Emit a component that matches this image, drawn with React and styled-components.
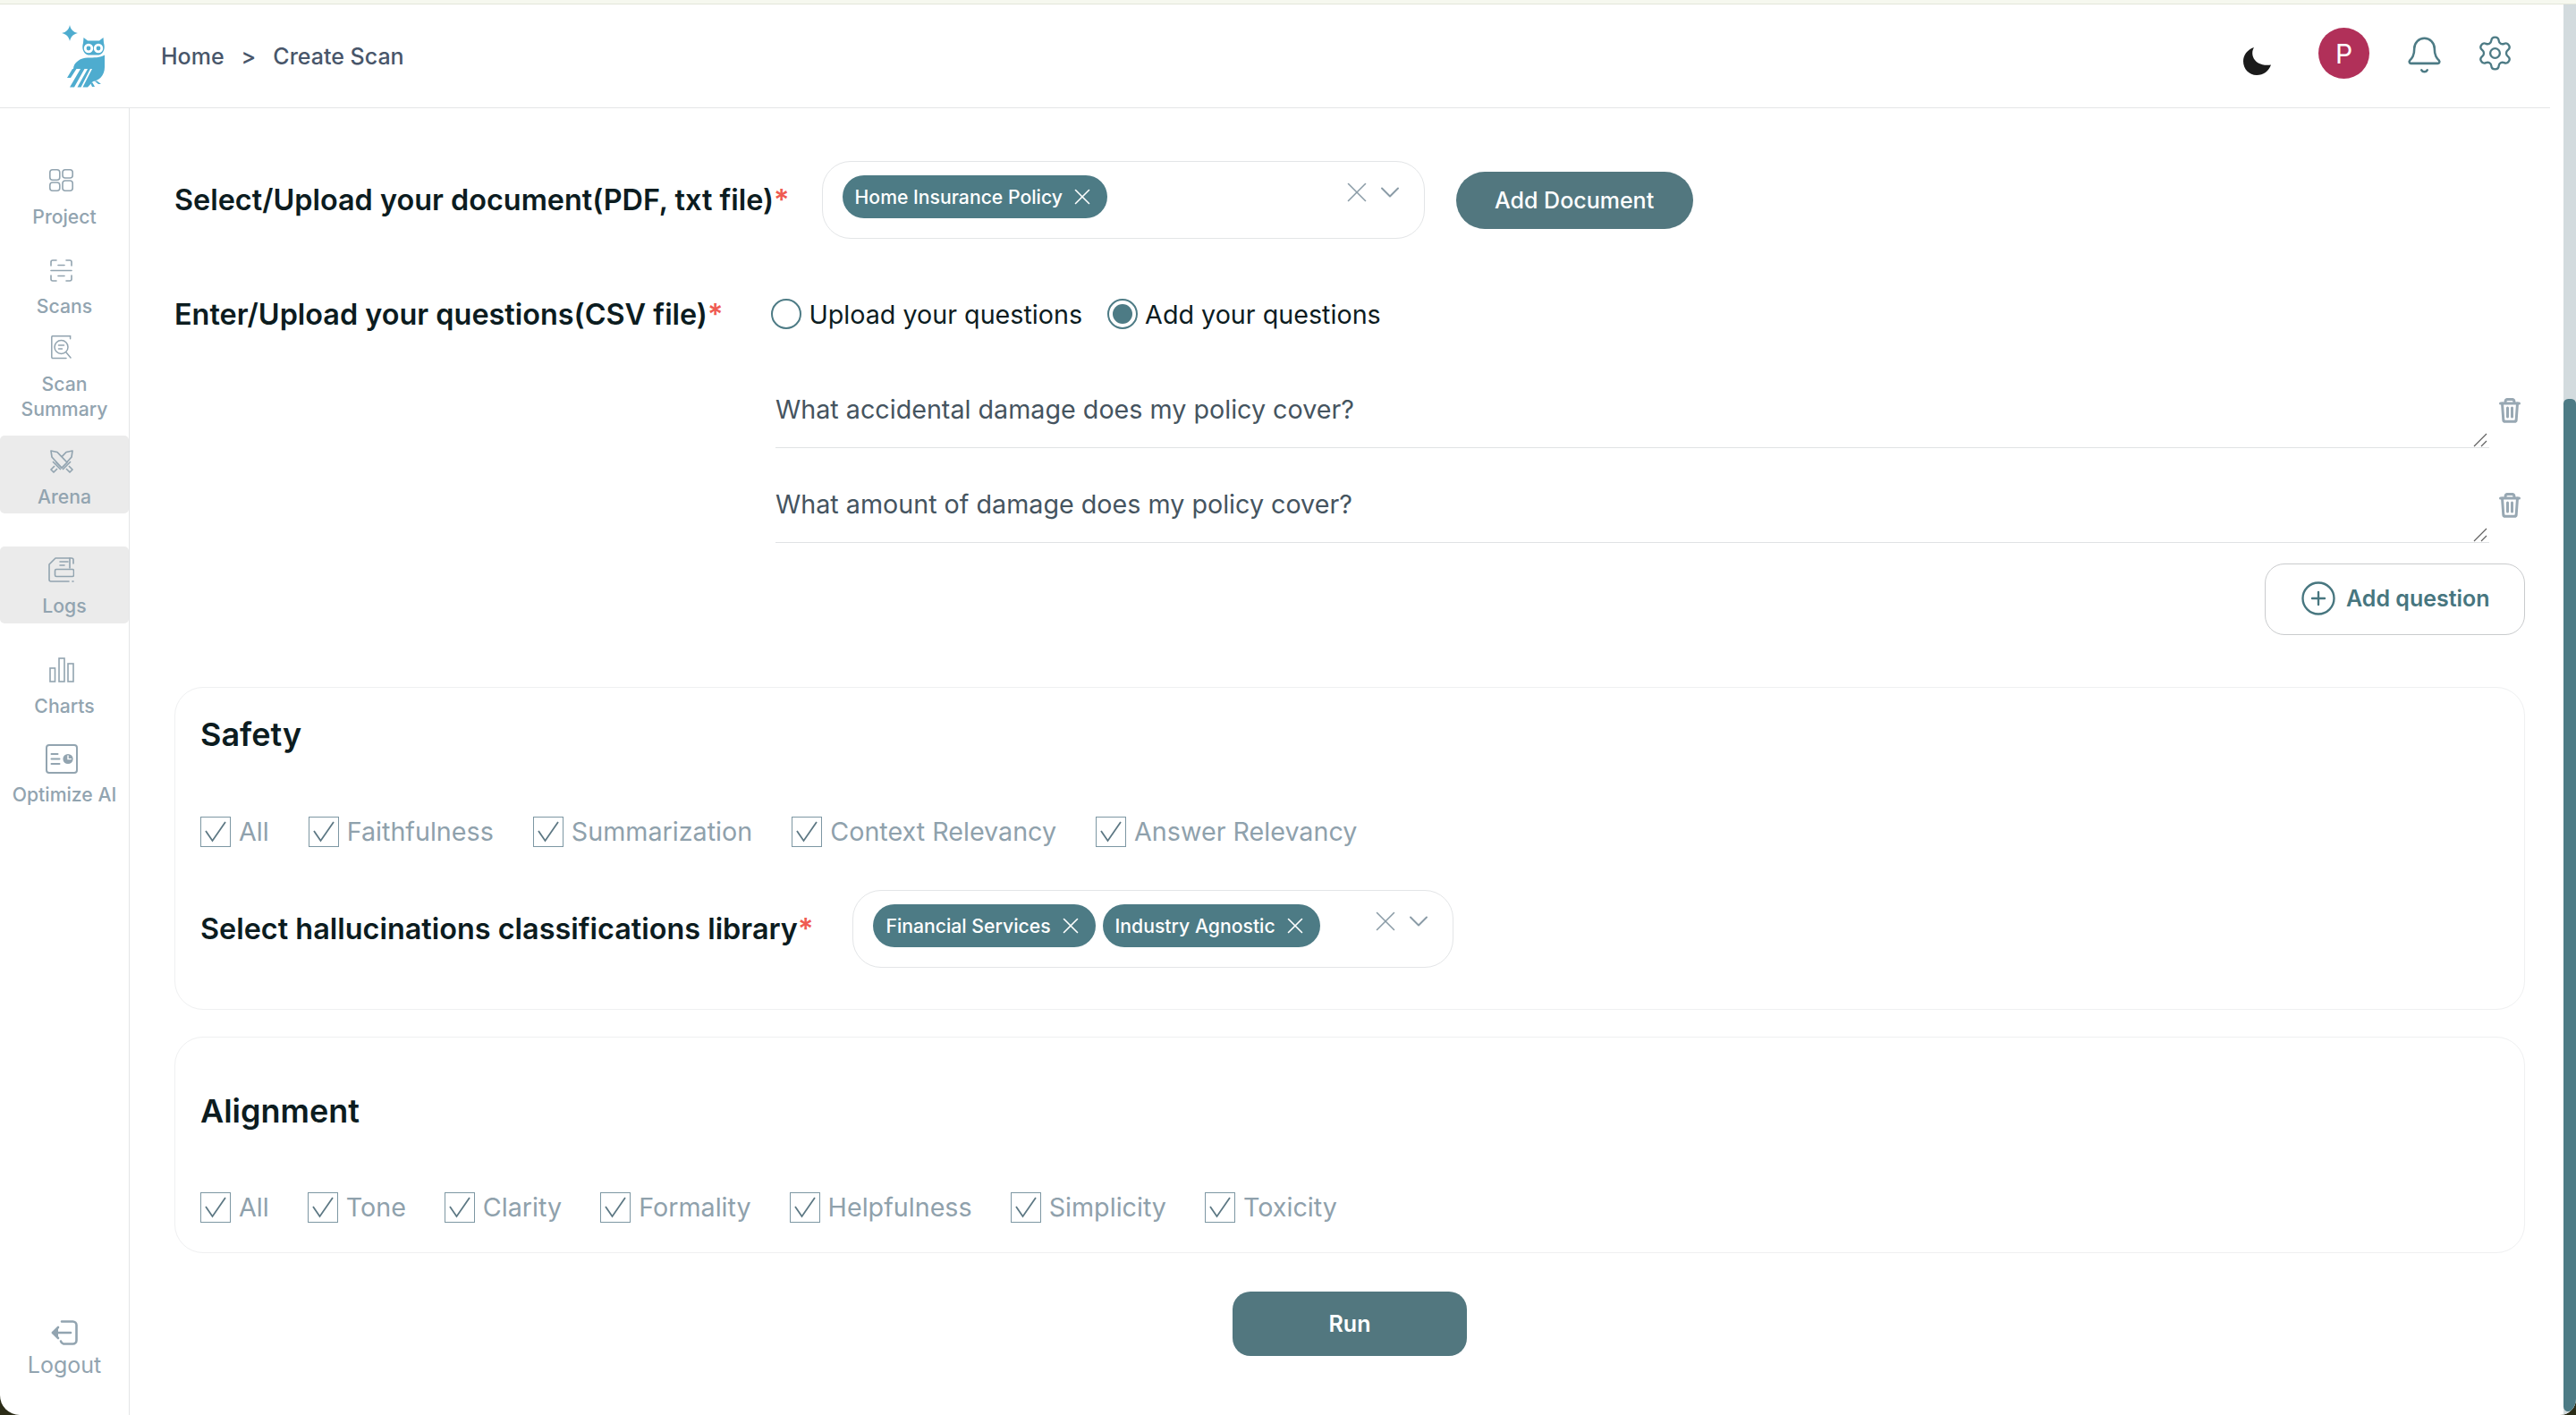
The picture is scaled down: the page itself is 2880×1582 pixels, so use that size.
import React from "react";
import styled, { createGlobalStyle } from "styled-components";
import { Bell, Settings, X, ChevronDown, CirclePlus } from "lucide-react";

const GlobalStyle = createGlobalStyle`
  html, body {
    margin: 0;
    padding: 0;
    background: #2b2c17;
    font-family: "Inter", "Liberation Sans", sans-serif;
  }
  * {
    box-sizing: border-box;
  }
`;

const ProjectIcon = () => (
  <svg width="27" height="25" viewBox="0 0 27 25" fill="none" stroke="currentColor" strokeWidth="1.6">
    <rect x="0.8" y="0.8" width="11" height="11.5" rx="3" />
    <rect x="15" y="0.8" width="11.2" height="9.2" rx="3" />
    <rect x="0.8" y="15" width="11" height="9.2" rx="3" />
    <rect x="15" y="13" width="11.2" height="11.2" rx="3" />
  </svg>
);

const ScansIcon = () => (
  <svg width="25" height="25" viewBox="0 0 25 25" fill="none" stroke="currentColor" strokeWidth="1.6" strokeLinecap="round">
    <path d="M1 7V3a2 2 0 0 1 2-2h4M18 1h4a2 2 0 0 1 2 2v4M1 18v4a2 2 0 0 0 2 2h4M18 24h4a2 2 0 0 0 2-2v-4" />
    <path d="M1 12.5h23M9 6.5h7M9 18.5h7" />
  </svg>
);

const SummaryIcon = () => (
  <svg width="23" height="27" viewBox="0 0 23 27" fill="none" stroke="currentColor" strokeWidth="1.5" strokeLinecap="round">
    <path d="M17 25.5H2a1.2 1.2 0 0 1-1.2-1.2V1.8A1.2 1.2 0 0 1 2 .7h19.6v3" />
    <circle cx="11.5" cy="13" r="7.5" />
    <path d="M8.5 11h6M8.5 15h4M17 19l5 6" />
  </svg>
);

const ArenaIcon = () => (
  <svg width="28" height="26" viewBox="0 0 28 26" fill="none" stroke="currentColor" strokeWidth="1.7" strokeLinejoin="round">
    <path d="M26 1l-7 1.500L8 14l6 6L25 8z" />
    <path d="M2 1l7 1.500L20 14l-6 6L3 8z" fill="#ebebeb" />
    <path d="M4 13l9 9M24 13l-9 9" />
    <path d="M6 18l-4 4 3 3 4-4M22 18l4 4-3 3-4-4" />
  </svg>
);

const LogsIcon = () => (
  <svg width="29" height="28" viewBox="0 0 29 28" fill="none" stroke="currentColor" strokeWidth="1.6" strokeLinecap="round" strokeLinejoin="round">
    <path d="M8 1h18a2 2 0 0 1 2 2v4M1 8v17a2 2 0 0 0 2 2h20M8 1L1 8M27 27h1" />
    <rect x="7.500" y="13.500" width="21" height="8" rx="1.500" />
    <path d="M13 5h9M13 9h5M24 1v11" />
  </svg>
);

const ChartsIcon = () => (
  <svg width="28" height="28" viewBox="0 0 28 28" fill="none" stroke="currentColor" strokeWidth="1.6">
    <rect x="1" y="12" width="5.500" height="15" />
    <rect x="11" y="1" width="6" height="26" />
    <rect x="21" y="7" width="6" height="20" />
  </svg>
);

const OptimizeIcon = () => (
  <svg width="36" height="33" viewBox="0 0 36 33" fill="none" stroke="currentColor" strokeWidth="2" strokeLinecap="round">
    <rect x="1" y="1" width="34" height="31" rx="3" />
    <path d="M6.500 11h7M6.500 16.500h9M6.500 22h9" />
    <circle cx="25" cy="16.500" r="5.600" fill="currentColor" stroke="none" />
    <path d="M25 13v3.600h3.400" stroke="#fff" strokeWidth="1.400" />
  </svg>
);

const LogoutIcon = () => (
  <svg width="30" height="28" viewBox="0 0 30 28" fill="none" stroke="currentColor" strokeWidth="2.600" strokeLinecap="round" strokeLinejoin="round">
    <path d="M12 1.500h12.500a4 4 0 0 1 4 4v17a4 4 0 0 1-4 4H14a4 4 0 0 1-3-3" />
    <path d="M2 14h20" />
    <path d="M8 8l-6 6 6 6" fill="currentColor" />
  </svg>
);

const Owl = () => (
  <svg width="48" height="70" viewBox="69 28 48 70" fill="#4eaccf">
    <path d="M78 28C79 33 82 36 87 37 82 38 79 41 78 46 77 41 74 38 69 37 74 36 77 33 78 28Z" />
    <path d="M93.500 42L98 45.500H111L115.500 42 116 48C118.500 56 114 61.500 109 61.500H100C95 61.500 90.500 56 93 48Z" />
    <circle cx="99" cy="54" r="5.200" fill="#fff" />
    <circle cx="110" cy="54" r="5.200" fill="#fff" />
    <circle cx="99" cy="54" r="2.400" />
    <circle cx="110" cy="54" r="2.400" />
    <path d="M117 61.500V75C117 85 110 90 104 91L98 97.500H92.500L103 77H82C82 70 90 64.500 98 64.500 105 64.500 112 64.500 117 61.500Z" />
    <path d="M75 87L81 77H85.500L79 87ZM78 97.500L90 77H94.500L83 97.500ZM86.500 97.500L98 77H101L90.500 97.500Z" />
    <path d="M105.500 90.500H108.500L113 94H110ZM101 92.500L103.500 92.500 106 97H103Z" />
  </svg>
);

const Moon = () => (
  <svg width="31" height="31" viewBox="0 0 31 31" fill="#1b1b1b">
    <path d="M12 0C7 8 12.500 22 31 19.500 28.500 26.500 22.500 31 15 31 6.500 31 0 24 0 15.500 0 8.500 4.500 2.500 12 0Z" />
  </svg>
);

const Trash = () => (
  <svg width="24" height="28" viewBox="0 0 24 28" fill="none" stroke="#98a8b3" strokeWidth="3" strokeLinecap="round" strokeLinejoin="round">
    <path d="M1.500 6h21" />
    <path d="M7 5.500V4a2.800 2.800 0 0 1 2.800-2.600h4.400A2.800 2.800 0 0 1 17 4v1.500" />
    <path d="M3.500 6l1.300 18.500a2 2 0 0 0 2 1.800h10.400a2 2 0 0 0 2-1.800L20.500 6" />
    <path d="M9.500 11v10M14.500 11v10" />
  </svg>
);

const Tick = () => (
  <svg width="30" height="30" viewBox="0 0 30 30" fill="none" stroke="#5d7884" strokeWidth="1.800">
    <path d="M4 14l7.500 11L26 4" />
  </svg>
);

const Frame = styled.div`
  width: 2880px;
  height: 1582px;
  display: flex;
  flex-direction: column;
  background: #fff;
  overflow: hidden;
  border-bottom-left-radius: 22px;
  border-bottom-right-radius: 18px;
`;

const TopStrip = styled.div`
  height: 5px;
  flex: none;
  background: #f6f8ef;
  border-bottom: 1.5px solid #e3e6da;
`;

const Shell = styled.div`
  flex: 1;
  min-height: 0;
  display: flex;
`;

const MainColumn = styled.div`
  flex: 1;
  min-width: 0;
  display: flex;
  flex-direction: column;
`;

const ScrollTrack = styled.div`
  width: 14px;
  flex: none;
  background: #d3dbde;
  padding: 441px 0 4px;
`;

const ScrollThumb = styled.div`
  height: 100%;
  background: #4d7b85;
  border-radius: 7px 7px 12px 7px;
`;

const Header = styled.header`
  height: 116px;
  flex: none;
  margin-right: 15px;
  border-bottom: 1.5px solid #e4e5e7;
  display: flex;
  align-items: center;
  padding: 0 40px 6px 69px;
`;

const LogoSlot = styled.span`
  display: flex;
  margin-top: 6px;
`;

const Crumbs = styled.nav`
  margin-left: 63px;
  margin-top: 7px;
  display: flex;
  align-items: center;
  gap: 19px;
  font-size: 25px;
  font-weight: 500;
  color: #48566a;
`;

const HeaderActions = styled.div`
  margin-left: auto;
  display: flex;
  align-items: center;
  color: #4d7b85;
`;

const MoonSlot = styled.span`
  display: flex;
  margin: 18px 53px 0 0;
`;

const Avatar = styled.span`
  width: 57px;
  height: 57px;
  border-radius: 50%;
  background: #b13059;
  color: #fff;
  font-size: 30px;
  display: flex;
  align-items: center;
  justify-content: center;
  margin-right: 39px;
`;

const BellSlot = styled.span`
  display: flex;
  margin: 3px 35px 0 0;
`;

const Workspace = styled.div`
  flex: 1;
  min-height: 0;
  display: flex;
`;

const Sidebar = styled.aside`
  width: 145px;
  flex: none;
  border-right: 1.5px solid #e4e5e7;
  display: flex;
  flex-direction: column;
  padding-bottom: 40px;
`;

const NavItem = styled.div`
  margin-top: ${(p) => p.$top}px;
  height: ${(p) => p.$height}px;
  padding-top: ${(p) => p.$pad}px;
  background: ${(p) => (p.$active ? "#ebebeb" : "transparent")};
  border-radius: 5px;
  width: 144px;
  display: flex;
  flex-direction: column;
  align-items: center;
  color: #92a4b0;
  font-size: 21.2px;
  font-weight: 500;
  line-height: 28px;
  text-align: center;
`;

const NavIcon = styled.span`
  display: flex;
  height: ${(p) => p.$height}px;
  align-items: flex-start;
  margin-left: -7px;
`;

const LogoutItem = styled.div`
  margin-top: auto;
  display: flex;
  flex-direction: column;
  align-items: center;
  color: #92a4b0;
  font-size: 25px;
  line-height: 32px;
  gap: 6px;
`;

const Content = styled.main`
  flex: 1;
  min-width: 0;
  padding: 59px 43px 0 50px;
`;

const FieldRow = styled.div`
  display: flex;
  align-items: center;
`;

const FieldLabel = styled.label`
  font-size: 32.4px;
  font-weight: 600;
  color: #0c1c1f;
  white-space: nowrap;
`;

const Star = styled.span`
  color: #ef5b52;
`;

const MultiSelect = styled.div`
  width: ${(p) => p.$width}px;
  height: 87px;
  margin-left: ${(p) => p.$left}px;
  border: 1.5px solid #e3e5e7;
  border-radius: 32px;
  padding: 15px 22px;
  display: flex;
  align-items: flex-start;
  gap: 8px;
`;

const Chip = styled.span`
  height: 48px;
  border-radius: 24px;
  background: #4d7b85;
  color: #fff;
  font-size: 21.2px;
  font-weight: 500;
  padding: 0 13px 0 14px;
  display: flex;
  align-items: center;
  gap: 7px;
  white-space: nowrap;
`;

const SelectControls = styled.span`
  margin-left: auto;
  display: flex;
  align-items: center;
  height: 38px;
  margin-right: -2px;
  color: #8a9ba6;
`;

const PrimaryButton = styled.button`
  height: 64px;
  width: 265px;
  margin-left: 35px;
  border: 0;
  border-radius: 32px;
  background: #52777f;
  color: #fff;
  font: 500 25px "Inter", sans-serif;
`;

const QuestionHead = styled(FieldRow)`
  margin-top: 64px;
  height: 40px;
`;

const RadioGroup = styled.div`
  display: flex;
  align-items: center;
  margin-left: 54px;
  gap: 28px;
`;

const RadioOption = styled.span`
  display: flex;
  align-items: center;
  gap: 8px;
  font-size: 28.7px;
  color: #0c1c1f;
`;

const RadioMark = styled.span`
  width: 34px;
  height: 34px;
  border-radius: 50%;
  border: 2.500px solid #4d7b85;
  padding: 4px;
  display: flex;
`;

const RadioDot = styled.span`
  flex: 1;
  border-radius: 50%;
  background: #4d7b85;
`;

const Questions = styled.div`
  margin-left: 672px;
  margin-top: 30px;
  display: flex;
  flex-direction: column;
  gap: 6px;
`;

const QuestionRow = styled.div`
  display: flex;
  align-items: flex-start;
  gap: 11px;
`;

const QuestionField = styled.div`
  flex: 1;
  position: relative;
  display: flex;
`;

const QuestionInput = styled.textarea`
  flex: 1;
  height: 100px;
  border: 0;
  border-bottom: 1.500px solid #e0e2e4;
  padding: 40px 0 0;
  outline: none;
  font: 400 28.7px/34px "Inter", sans-serif;
  color: #45545f;
  resize: none;
`;

const ResizeGrip = styled.svg`
  position: absolute;
  right: 2px;
  bottom: 1px;
`;

const TrashButton = styled.span`
  display: flex;
  width: 29px;
  padding-top: 44px;
`;

const AddRow = styled.div`
  display: flex;
  justify-content: flex-end;
  margin-top: 23px;
`;

const AddQuestion = styled.button`
  width: 291px;
  height: 80px;
  background: #fff;
  border: 1.500px solid #c9cbcd;
  border-radius: 22px;
  color: #47767f;
  font: 600 25px "Inter", sans-serif;
  display: flex;
  align-items: center;
  padding: 0 0 2px 38px;
  gap: 10px;
`;

const Card = styled.section`
  height: ${(p) => p.$height}px;
  margin-top: ${(p) => p.$top}px;
  border: 1.500px solid #eff0f1;
  border-radius: 32px;
  padding: ${(p) => p.$pad}px 28px 0;
`;

const CardTitle = styled.h2`
  margin: 0;
  font-size: 36px;
  font-weight: 600;
  line-height: 44px;
  color: #0c1c1f;
`;

const Checks = styled.div`
  display: flex;
  align-items: center;
  gap: ${(p) => p.$gap}px;
  margin-top: ${(p) => p.$top}px;
`;

const CheckOption = styled.span`
  display: flex;
  align-items: center;
  gap: 9px;
  font-size: 28.7px;
  line-height: 34px;
  color: #8fa1ac;
`;

const CheckBox = styled.span`
  width: 34px;
  height: 34px;
  border: 1.500px solid #7d97a3;
  display: flex;
  align-items: center;
  justify-content: center;
`;

const LibraryRow = styled(FieldRow)`
  margin-top: 48px;
`;

const RunRow = styled.div`
  display: flex;
  justify-content: center;
  margin-top: 43px;
`;

const RunButton = styled.button`
  width: 262px;
  height: 72px;
  border: 0;
  border-radius: 20px;
  background: #52777f;
  color: #fff;
  font: 600 25px "Inter", sans-serif;
`;

const navItems = [
  { label: "Project", icon: <ProjectIcon />, top: 68, height: 82, pad: 0, iconHeight: 39 },
  { label: "Scans", icon: <ScansIcon />, top: 19, height: 68, pad: 0, iconHeight: 38 },
  { label: "Scan Summary", icon: <SummaryIcon />, top: 17, height: 100, pad: 0, iconHeight: 40 },
  { label: "Arena", icon: <ArenaIcon />, top: 12, height: 87, pad: 16, iconHeight: 38, active: true },
  { label: "Logs", icon: <LogsIcon />, top: 37, height: 86, pad: 12, iconHeight: 40, active: true },
  { label: "Charts", icon: <ChartsIcon />, top: 38, height: 68, pad: 0, iconHeight: 40 },
  { label: "Optimize AI", icon: <OptimizeIcon />, top: 29, height: 70, pad: 0, iconHeight: 42 },
];

const safety = ["All", "Faithfulness", "Summarization", "Context Relevancy", "Answer Relevancy"];
const alignment = ["All", "Tone", "Clarity", "Formality", "Helpfulness", "Simplicity", "Toxicity"];
const questions = [
  "What accidental damage does my policy cover?",
  "What amount of damage does my policy cover?",
];

const CheckList = ({ items, top, gap }) => (
  <Checks $top={top} $gap={gap}>
    {items.map((item) => (
      <CheckOption key={item}>
        <CheckBox>
          <Tick />
        </CheckBox>
        {item}
      </CheckOption>
    ))}
  </Checks>
);

const SelectChip = ({ children }) => (
  <Chip>
    {children}
    <X size={30} strokeWidth={1.3} />
  </Chip>
);

const Controls = () => (
  <SelectControls>
    <X size={38} strokeWidth={1} />
    <ChevronDown size={36} strokeWidth={1.3} />
  </SelectControls>
);

export default function App() {
  return (
    <>
      <GlobalStyle />
      <Frame>
        <TopStrip />
        <Shell>
          <MainColumn>
            <Header>
              <LogoSlot>
                <Owl />
              </LogoSlot>
              <Crumbs>
                <span>Home</span>
                <span>&gt;</span>
                <span>Create Scan</span>
              </Crumbs>
              <HeaderActions>
                <MoonSlot>
                  <Moon />
                </MoonSlot>
                <Avatar>P</Avatar>
                <BellSlot>
                  <Bell size={45} strokeWidth={1.35} />
                </BellSlot>
                <Settings size={43} strokeWidth={1.3} />
              </HeaderActions>
            </Header>
            <Workspace>
              <Sidebar>
                {navItems.map((item) => (
                  <NavItem key={item.label} $top={item.top} $height={item.height} $pad={item.pad} $active={item.active}>
                    <NavIcon $height={item.iconHeight}>{item.icon}</NavIcon>
                    {item.label}
                  </NavItem>
                ))}
                <LogoutItem>
                  <LogoutIcon />
                  Logout
                </LogoutItem>
              </Sidebar>
              <Content>
                <FieldRow>
                  <FieldLabel>
                    Select/Upload your document(PDF, txt file)<Star>*</Star>
                  </FieldLabel>
                  <MultiSelect $width={674} $left={36}>
                    <SelectChip>Home Insurance Policy</SelectChip>
                    <Controls />
                  </MultiSelect>
                  <PrimaryButton>Add Document</PrimaryButton>
                </FieldRow>

                <QuestionHead>
                  <FieldLabel>
                    Enter/Upload your questions(CSV file)<Star>*</Star>
                  </FieldLabel>
                  <RadioGroup>
                    <RadioOption>
                      <RadioMark />
                      Upload your questions
                    </RadioOption>
                    <RadioOption>
                      <RadioMark>
                        <RadioDot />
                      </RadioMark>
                      Add your questions
                    </RadioOption>
                  </RadioGroup>
                </QuestionHead>

                <Questions>
                  {questions.map((question) => (
                    <QuestionRow key={question}>
                      <QuestionField>
                        <QuestionInput defaultValue={question} />
                        <ResizeGrip width="16" height="16" viewBox="0 0 16 16" fill="none" stroke="#606060" strokeWidth="1.2">
                          <path d="M1 15L15 1M9 15l6-6" />
                        </ResizeGrip>
                      </QuestionField>
                      <TrashButton>
                        <Trash />
                      </TrashButton>
                    </QuestionRow>
                  ))}
                </Questions>

                <AddRow>
                  <AddQuestion>
                    <CirclePlus size={42} strokeWidth={1.35} />
                    Add question
                  </AddQuestion>
                </AddRow>

                <Card $top={58} $height={361} $pad={30}>
                  <CardTitle>Safety</CardTitle>
                  <CheckList items={safety} top={70} gap={44} />
                  <LibraryRow>
                    <FieldLabel>
                      Select hallucinations classifications library<Star>*</Star>
                    </FieldLabel>
                    <MultiSelect $width={672} $left={44}>
                      <SelectChip>Financial Services</SelectChip>
                      <SelectChip>Industry Agnostic</SelectChip>
                      <Controls />
                    </MultiSelect>
                  </LibraryRow>
                </Card>

                <Card $top={30} $height={242} $pad={60}>
                  <CardTitle>Alignment</CardTitle>
                  <CheckList items={alignment} top={69} gap={43} />
                </Card>

                <RunRow>
                  <RunButton>Run</RunButton>
                </RunRow>
              </Content>
            </Workspace>
          </MainColumn>
          <ScrollTrack>
            <ScrollThumb />
          </ScrollTrack>
        </Shell>
      </Frame>
    </>
  );
}
